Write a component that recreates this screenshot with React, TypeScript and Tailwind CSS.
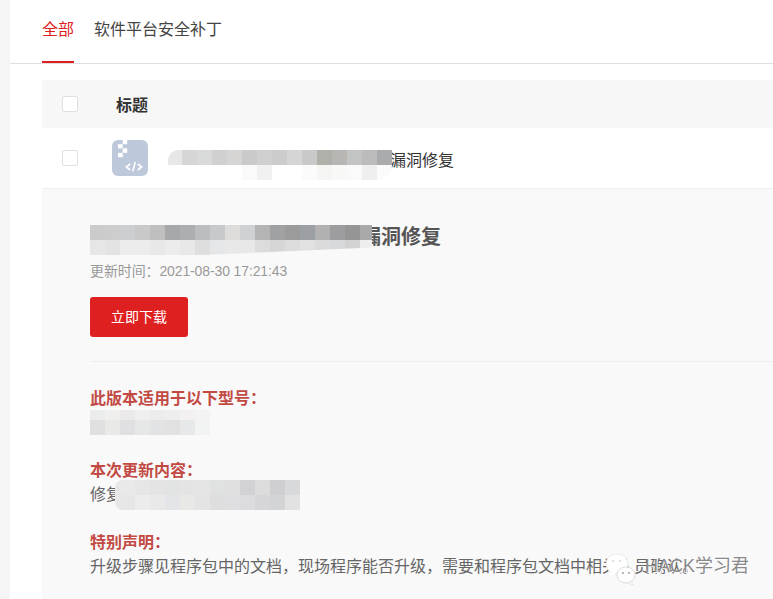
const FONT = "font-['Liberation_Sans','Noto_Sans_CJK_SC',sans-serif]";

const ROW_MOSAIC = [
  ["#d6d6d6", "#d9dbda", "#d0d0d0", "#d6d5d3", "#cbcacb", "#d0d0d0", "#cccccc", "#d6d5d5", "#c9c9c9", "#b0b0ab", "#b7b6b3", "#c2c4c3", "#bcbcbc", "#aaabad"],
  ["#ffffff", "#ffffff", "#ffffff", "#ffffff", "#fbfafa", "#f1f1f1", "#ffffff", "#ffffff", "#fbfbfb", "#f5f5f3", "#f8f8f7", "#fafafa", "#efefef", "#fbfbfb"],
];

const TITLE_MOSAIC = [
  ["#cbcbcb", "#cdcdcd", "#cdcecf", "#c9c9c9", "#bfbfbf", "#a7a8aa", "#adaeb0", "#bcbdbf", "#c8c9cb", "#dddcda", "#d0d1d4", "#b4b4b4", "#a0a1a3", "#9b9b9c", "#9ca0a4", "#b1b1b1", "#9d9d9f", "#959596", "#a9a9a9"],
  ["#e6e6e6", "#e3e3e3", "#ececec", "#ececec", "#e8e8e8", "#ececec", "#e8e8e8", "#dedede", "#e5e6e8", "#e8e8e8", "#e8e8e9", "#dcdcdc", "#d6d6d7", "#dcdcdc", "#e1e1e1", "#dbdbdb", "#d8d9da", "#d2d2d2", "#eeeeee"],
];

const MODEL_MOSAIC = [
  ["#ebecec", "#f1eeee", "#ebe9ea", "#f0efef", "#ececed", "#eeeeef", "#f2f0f1", "#f3f3f4"],
  ["#e0e0e0", "#e9e9e7", "#e0e0e2", "#e6e7e7", "#e2e3e4", "#e1e1e2", "#e7e8e9", "#f2f3f3"],
];

const FIX_MOSAIC = [
  ["#e9e9e9", "#e6e6e6", "#e4e4e4", "#e2e3e3", "#e4e4e4", "#e5e5e5", "#e0e1e1", "#e0e0e0", "#d2d2d4", "#dcdcdc", "#cfcfd1", "#d8d9da"],
  ["#e6e6e6", "#ececec", "#e9e9e9", "#e4e5e8", "#e8e8e6", "#e4e4e4", "#dededf", "#dfdfe1", "#dcdcde", "#d6d6d8", "#d3d4d6", "#e2e2e2"],
];

function Mosaic({ rows, rowHeights, className = "" }: { rows: string[][]; rowHeights: string[]; className?: string }) {
  return (
    <div className={className}>
      {rows.map((cells, i) => (
        <div key={i} className={`flex ${rowHeights[i]}`}>
          {cells.map((c, j) => (
            <div key={j} className="w-[15px] shrink-0" style={{ backgroundColor: c }} />
          ))}
        </div>
      ))}
    </div>
  );
}

function Checkbox() {
  return <div className="w-4 h-4 shrink-0 rounded-[2px] border border-[#dfdfe6] bg-white" />;
}

function FileIcon() {
  return (
    <svg width="36" height="36" viewBox="0 0 36 36" className="shrink-0">
      <rect width="36" height="36" rx="6" fill="#bdc9db" />
      <rect x="10.7" y="0" width="4.5" height="4.2" fill="#fff" />
      <rect x="6" y="4.2" width="4.7" height="4.2" fill="#fff" />
      <rect x="10.7" y="8.4" width="4.5" height="4.4" fill="#fff" />
      <rect x="6" y="12.8" width="4.7" height="4.4" fill="#fff" />
      <path d="M18.2 24l-3.8 3 3.8 3M20.8 31.4l2.4-9.4M25.8 24l3.8 3-3.8 3" fill="none" stroke="#fff" strokeWidth="1.6" />
    </svg>
  );
}

function Watermark() {
  return (
    <div className="absolute left-[606px] top-[552px] flex items-start">
      <svg width="36" height="36" viewBox="0 0 36 36" className="shrink-0">
        <ellipse cx="11" cy="12" rx="11" ry="10" fill="#fff" stroke="#e4e4e4" strokeWidth="0.7" />
        <path d="M5 19l-1 5 6-3z" fill="#fff" />
        <ellipse cx="20" cy="23" rx="9" ry="8" fill="#fff" stroke="#cfcfcf" strokeWidth="0.7" />
        <path d="M25 29l2 4-5-2z" fill="#fff" stroke="#cfcfcf" strokeWidth="0.5" />
        <circle cx="7" cy="9" r="1" fill="#d5d5d5" />
        <circle cx="14" cy="9" r="1" fill="#d5d5d5" />
        <circle cx="17" cy="21" r="0.9" fill="#999" />
        <circle cx="23" cy="21" r="0.9" fill="#999" />
      </svg>
      <span className="ml-[3px] mt-[2px] text-[18px] leading-6 whitespace-nowrap text-[#8a8a8a] [text-shadow:1px_1px_0_#fff]">HACK学习君</span>
    </div>
  );
}

export default function App() {
  return (
    <div className={`${FONT} relative flex h-[599px] overflow-hidden bg-white`}>
      <div className="w-[10px] shrink-0 bg-[#f5f5f5]" />
      <div className="flex-1 min-w-0">
        <div className="flex h-[64px] gap-5 border-b border-[#e0e0e2] px-8 text-base">
          <div className="h-[63px] border-b-2 border-[#e02020] pt-[18px] leading-6 text-[#e02020]">全部</div>
          <div className="pt-[18px] leading-6 text-[#444]">软件平台安全补丁</div>
        </div>

        <div className="ml-8 mt-4">
          <div className="flex h-12 items-center bg-[#f7f7f7] pl-5">
            <Checkbox />
            <div className="ml-[38px] pt-1 text-base font-bold text-[#333]">标题</div>
          </div>

          <div className="flex h-[61px] items-center border-b border-[#eeeef4] pl-5">
            <Checkbox />
            <div className="ml-[34px]"><FileIcon /></div>
            <div className="ml-5 mt-[14px] flex items-start">
              <div className="relative z-10 h-[30px]">
                <div className="flex">
                  <div className="h-[15px] w-[14px] rounded-tl-[10px] bg-[#e8e7e7]" />
                  <Mosaic rows={[ROW_MOSAIC[0]]} rowHeights={["h-[15px]"]} />
                </div>
                <div className="ml-[14px] overflow-hidden rounded-b-[20px]">
                  <Mosaic rows={[ROW_MOSAIC[1]]} rowHeights={["h-[15px]"]} />
                </div>
              </div>
              <span className="-ml-[2px] text-base leading-[22px] text-[#333]">漏洞修复</span>
            </div>
          </div>

          <div className="h-[420px] bg-[#f9f9f9] pl-12 pt-9">
            <div className="flex h-[30px] items-start">
              <Mosaic
                rows={TITLE_MOSAIC}
                rowHeights={["h-[15px]", "h-[15px]"]}
                className="relative z-10 w-[282px] shrink-0 overflow-hidden [clip-path:polygon(0_0,100%_0,100%_75%,40%_100%,0_100%)]"
              />
              <span className="-ml-[11px] -mt-[2px] text-[20px] font-bold leading-7 text-[#555]">漏洞修复</span>
            </div>
            <div className="mt-[6px] text-sm leading-5 tracking-[-0.12px] text-[#999]">更新时间：2021-08-30 17:21:43</div>
            <button className="mt-4 block h-10 w-[98px] rounded-[3px] bg-[#df2020] text-sm text-white">立即下载</button>
            <div className="mt-6 border-t border-[#eeeeee]" />

            <div className="mt-6 h-6 text-base font-bold leading-[26px] text-[#c24a44]">此版本适用于以下型号：</div>
            <Mosaic rows={MODEL_MOSAIC} rowHeights={["h-[10px]", "h-[15px]"]} />

            <div className="mt-[23px] h-6 text-base font-bold leading-[26px] text-[#c24a44]">本次更新内容：</div>
            <div className="relative h-6 text-base leading-[26px] text-[#666]">
              修复
              <Mosaic
                rows={FIX_MOSAIC}
                rowHeights={["h-[15px]", "h-[15px]"]}
                className="absolute left-[25px] -top-[2px] overflow-hidden rounded-l-[8px] bg-[#e7e7e7] pl-[5px]"
              />
            </div>

            <div className="mt-6 h-6 text-base font-bold leading-[26px] text-[#c24a44]">特别声明：</div>
            <div className="h-6 text-base leading-[26px] whitespace-nowrap text-[#666]">升级步骤见程序包中的文档，现场程序能否升级，需要和程序包文档中相关人员确认。</div>
          </div>
        </div>
      </div>
      <Watermark />
    </div>
  );
}
